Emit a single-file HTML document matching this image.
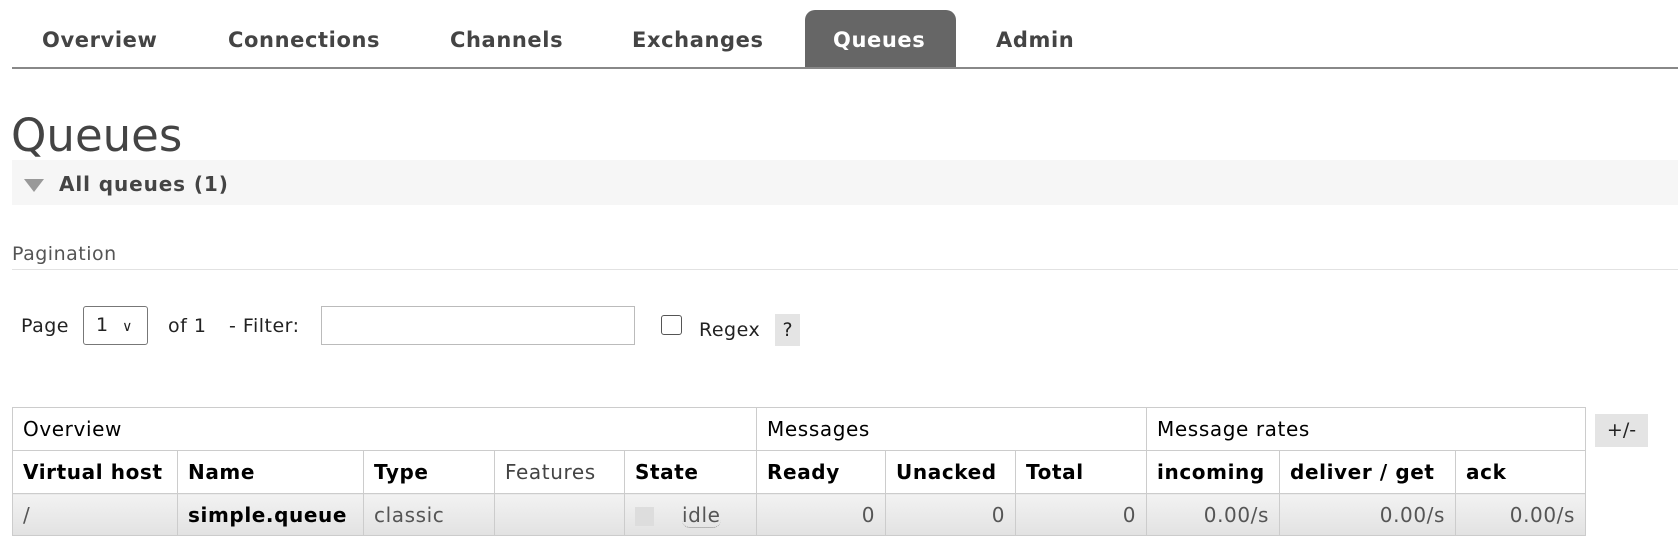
<!DOCTYPE html>
<html><head><style>
*{margin:0;padding:0;box-sizing:border-box}
body{width:1678px;height:554px;background:#fff;font-family:"DejaVu Sans",Verdana,sans-serif;color:#444;position:relative;overflow:hidden}
.a{position:absolute;white-space:nowrap}
.nav{font-weight:bold;font-size:21px;letter-spacing:0.6px;top:28px;color:#444}
table{position:absolute;left:12px;top:407px;border-collapse:collapse;font-size:20px;letter-spacing:0.6px;table-layout:fixed;width:1573px}
td,th{border:1px solid #ccc;padding:0 10px;text-align:left;white-space:nowrap;overflow:hidden}
th{color:#000}
tr.h1 td{height:43px;color:#000;font-weight:normal}
tr.h2 th{height:43px}
tr.d td{height:42px;background:linear-gradient(#f2f2f2,#e2e2e2);color:#555}
.r{text-align:right}
.t{font-size:19px;letter-spacing:0.5px;color:#222}
</style></head><body>
<div class="a nav" style="left:42px">Overview</div>
<div class="a nav" style="left:228px">Connections</div>
<div class="a nav" style="left:450px">Channels</div>
<div class="a nav" style="left:632px">Exchanges</div>
<div class="a" style="left:805px;top:10px;width:151px;height:58px;background:#666;border-radius:10px 10px 0 0"></div>
<div class="a nav" style="left:833px;color:#fff">Queues</div>
<div class="a nav" style="left:996px">Admin</div>
<div class="a" style="left:12px;top:67px;width:1666px;height:2px;background:#888"></div>
<div class="a" style="left:11px;top:109px;font-size:45px;color:#444">Queues</div>
<div class="a" style="left:12px;top:160px;width:1666px;height:45px;background:#f6f6f6"></div>
<div class="a" style="left:24px;top:179px;width:0;height:0;border-left:10px solid transparent;border-right:10px solid transparent;border-top:13px solid #999"></div>
<div class="a" style="left:59px;top:172px;font-size:20px;letter-spacing:0.9px;font-weight:bold">All queues (1)</div>
<div class="a" style="left:12px;top:243px;font-size:19px;letter-spacing:0.5px;color:#555">Pagination</div>
<div class="a" style="left:12px;top:269px;width:1666px;height:1px;background:#e2e2e2"></div>
<div class="a t" style="left:21px;top:315px">Page</div>
<div class="a" style="left:83px;top:306px;width:65px;height:39px;border:1px solid #777;border-radius:3px;font-size:19px;color:#222;padding:7px 0 0 12px">1 <span style="font-size:14px;margin-left:8px">&#8744;</span></div>
<div class="a t" style="left:168px;top:315px">of 1</div>
<div class="a t" style="left:229px;top:315px">- Filter:</div>
<div class="a" style="left:321px;top:306px;width:314px;height:39px;border:1px solid #bbb"></div>
<div class="a" style="left:661px;top:315px;width:21px;height:20px;border:1.5px solid #555;border-radius:3px"></div>
<div class="a t" style="left:699px;top:319px">Regex</div>
<div class="a" style="left:775px;top:314px;width:25px;height:32px;background:#e4e4e4;font-size:19px;color:#222;text-align:center;padding-top:5px">?</div>
<table>
<colgroup><col style="width:165px"><col style="width:186px"><col style="width:131px"><col style="width:130px"><col style="width:132px"><col style="width:129px"><col style="width:130px"><col style="width:131px"><col style="width:133px"><col style="width:176px"><col style="width:130px"></colgroup>
<tr class="h1"><td colspan="5">Overview</td><td colspan="3">Messages</td><td colspan="3">Message rates</td></tr>
<tr class="h2"><th>Virtual host</th><th>Name</th><th>Type</th><th style="font-weight:normal;color:#444">Features</th><th>State</th><th>Ready</th><th>Unacked</th><th>Total</th><th>incoming</th><th>deliver / get</th><th>ack</th></tr>
<tr class="d"><td>/</td><td style="font-weight:bold;color:#000">simple.queue</td><td>classic</td><td></td><td><span style="display:inline-block;width:19px;height:19px;background:#ddd;vertical-align:middle;margin-right:28px"></span><span style="border-bottom:1px dotted #888;border-radius:0 0 8px 8px">idle</span></td><td class="r">0</td><td class="r">0</td><td class="r">0</td><td class="r">0.00/s</td><td class="r">0.00/s</td><td class="r">0.00/s</td></tr>
</table>
<div class="a" style="left:1595px;top:414px;width:53px;height:33px;background:#e4e4e4;font-size:19px;color:#222;text-align:center;padding-top:5px">+/-</div>
</body></html>
